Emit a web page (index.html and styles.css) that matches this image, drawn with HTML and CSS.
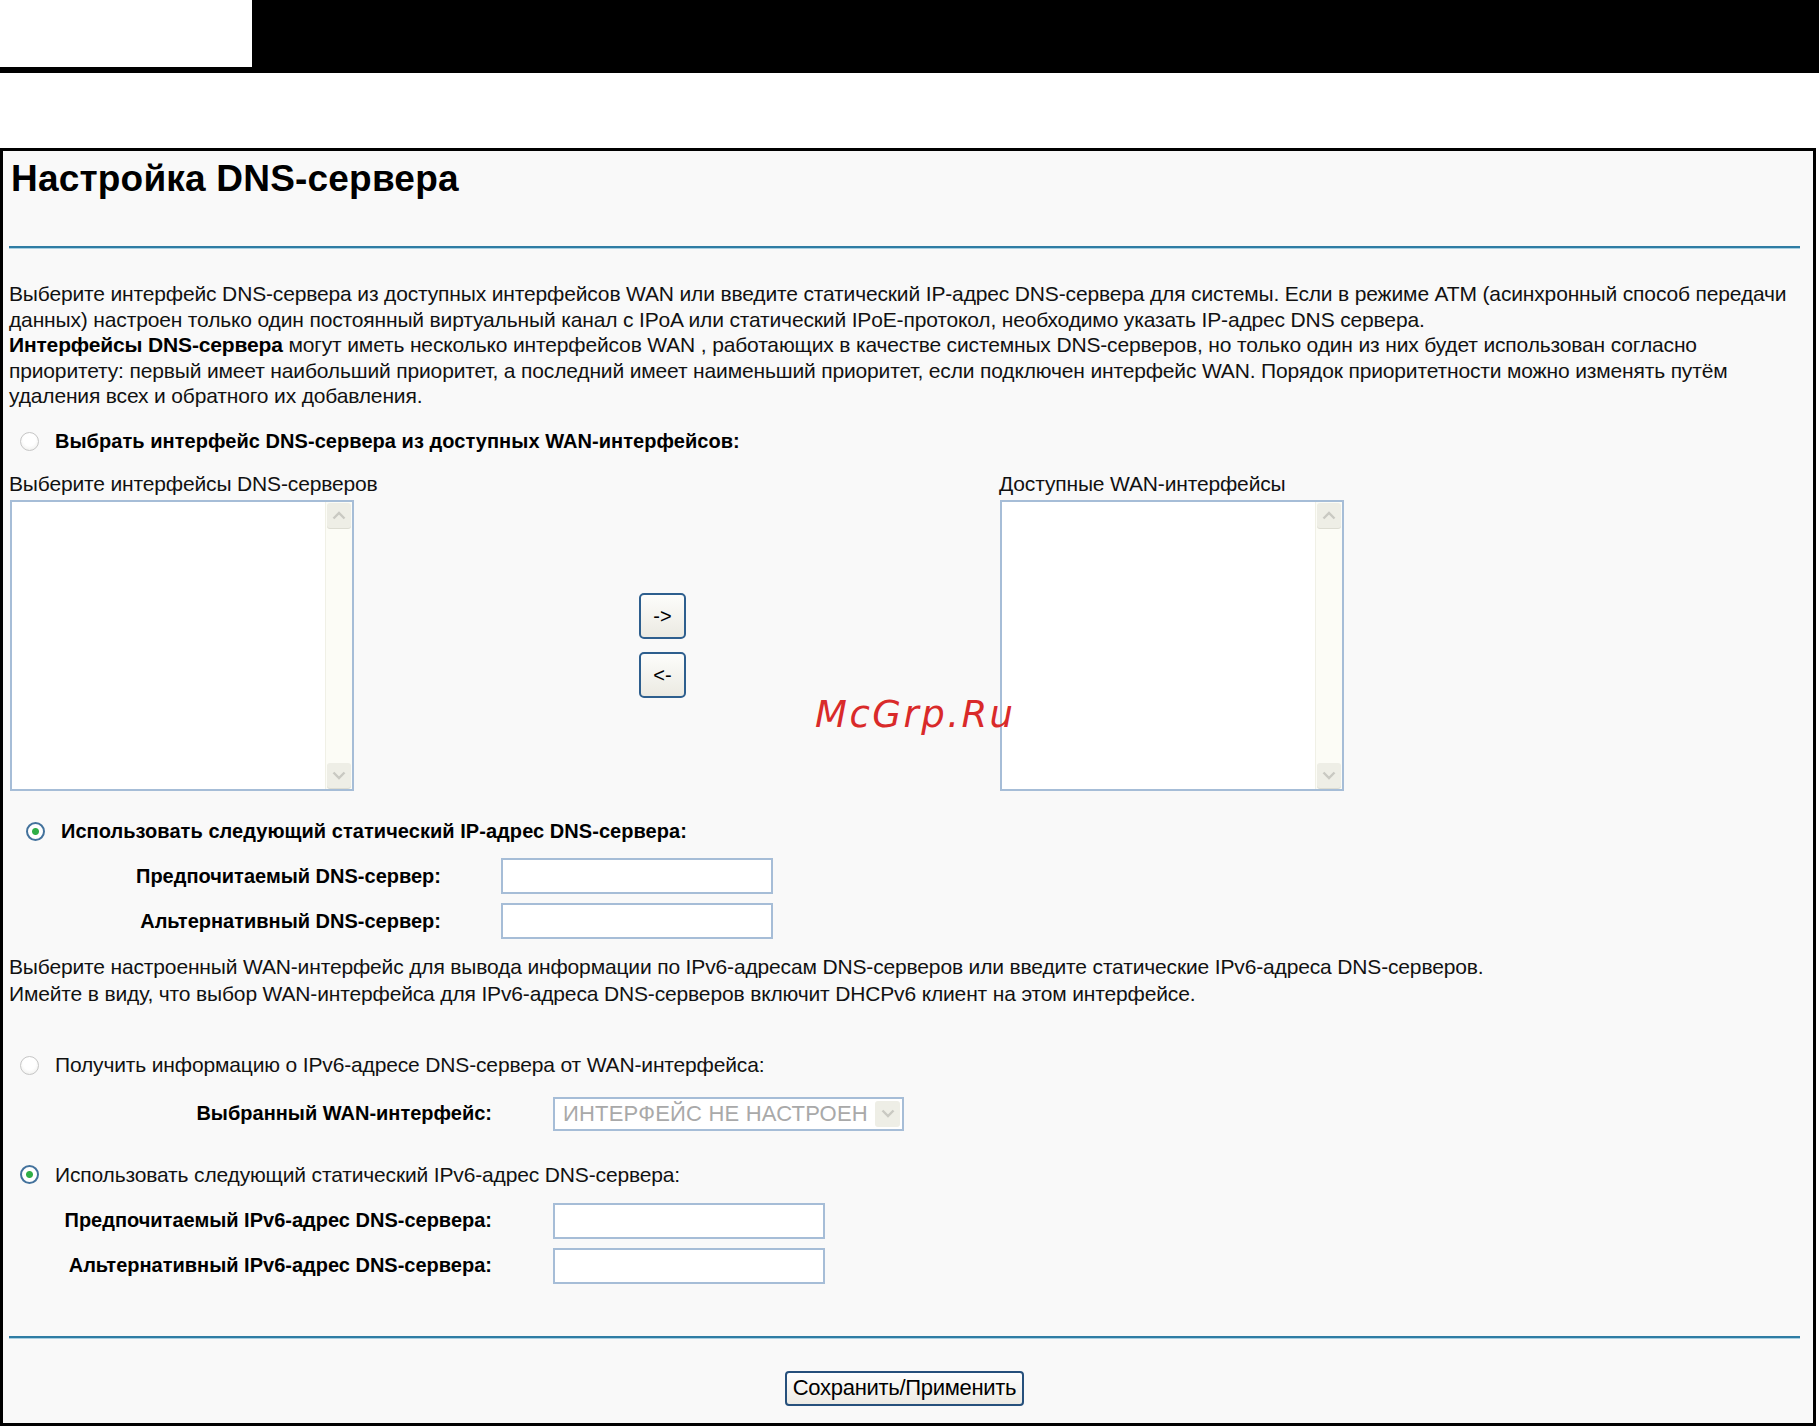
FILE: index.html
```html
<!DOCTYPE html>
<html lang="ru">
<head>
    <meta charset="UTF-8">
    <title>Настройка DNS-сервера</title>
    <link rel="stylesheet" href="styles.css">
</head>
<body>

    <div class="topbar">
        <div class="topbar-logo"></div>
    </div>

    <div class="panel">
        <h1>Настройка DNS-сервера</h1>
        <div class="sep sep-top"></div>

        <p class="intro">Выберите интерфейс DNS-сервера из доступных интерфейсов WAN или введите статический IP-адрес DNS-сервера для системы. Если в режиме АТМ (асинхронный способ передачи данных) настроен только один постоянный виртуальный канал с IPoA или статический IPoE-протокол, необходимо указать IP-адрес DNS сервера.<br><b>Интерфейсы DNS-сервера</b> могут иметь несколько интерфейсов WAN , работающих в качестве системных DNS-серверов, но только один из них будет использован согласно приоритету: первый имеет наибольший приоритет, а последний имеет наименьший приоритет, если подключен интерфейс WAN. Порядок приоритетности можно изменять путём удаления всех и обратного их добавления.</p>

        <label class="radio-row row-wan">
            <input type="radio" name="dns4">
            <b>Выбрать интерфейс DNS-сервера из доступных WAN-интерфейсов:</b>
        </label>

        <div class="lists">
            <div class="list-col">
                <div class="list-title">Выберите интерфейсы DNS-серверов</div>
                <div class="listbox">
                    <div class="scroll">
                        <span class="sb-btn"><svg width="14" height="9" viewBox="0 0 14 9"><path d="M1.5 7.5 L7 2 L12.5 7.5" fill="none" stroke="#c9c9c2" stroke-width="2.4"/></svg></span>
                        <span class="sb-btn"><svg width="14" height="9" viewBox="0 0 14 9"><path d="M1.5 1.5 L7 7 L12.5 1.5" fill="none" stroke="#c9c9c2" stroke-width="2.4"/></svg></span>
                    </div>
                </div>
            </div>
            <div class="move-btns">
                <button class="move">-&gt;</button>
                <button class="move">&lt;-</button>
            </div>
            <div class="list-col list-right">
                <div class="list-title">Доступные WAN-интерфейсы</div>
                <div class="listbox">
                    <div class="scroll">
                        <span class="sb-btn"><svg width="14" height="9" viewBox="0 0 14 9"><path d="M1.5 7.5 L7 2 L12.5 7.5" fill="none" stroke="#c9c9c2" stroke-width="2.4"/></svg></span>
                        <span class="sb-btn"><svg width="14" height="9" viewBox="0 0 14 9"><path d="M1.5 1.5 L7 7 L12.5 1.5" fill="none" stroke="#c9c9c2" stroke-width="2.4"/></svg></span>
                    </div>
                </div>
            </div>
        </div>

        <label class="radio-row row-static">
            <input type="radio" name="dns4" checked>
            <b>Использовать следующий статический IP-адрес DNS-сервера:</b>
        </label>

        <div class="form-row first">
            <div class="label">Предпочитаемый DNS-сервер:</div>
            <input class="field" type="text">
        </div>
        <div class="form-row">
            <div class="label">Альтернативный DNS-сервер:</div>
            <input class="field" type="text">
        </div>

        <p class="ipv6-note">Выберите настроенный WAN-интерфейс для вывода информации по IPv6-адресам DNS-серверов или введите статические IPv6-адреса DNS-серверов.<br>Имейте в виду, что выбор WAN-интерфейса для IPv6-адреса DNS-серверов включит DHCPv6 клиент на этом интерфейсе.</p>

        <label class="radio-row row-v6wan">
            <input type="radio" name="dns6">
            <span>Получить информацию о IPv6-адресе DNS-сервера от WAN-интерфейса:</span>
        </label>

        <div class="form-row wide select-row">
            <div class="label">Выбранный WAN-интерфейс:</div>
            <div class="select">
                <span class="select-text">ИНТЕРФЕЙС НЕ НАСТРОЕН</span>
                <span class="select-arrow"><svg width="14" height="9" viewBox="0 0 14 9"><path d="M1.5 1.5 L7 7 L12.5 1.5" fill="none" stroke="#c9c9c2" stroke-width="2.4"/></svg></span>
            </div>
        </div>

        <label class="radio-row row-v6static">
            <input type="radio" name="dns6" checked>
            <span>Использовать следующий статический IPv6-адрес DNS-сервера:</span>
        </label>

        <div class="form-row wide first">
            <div class="label">Предпочитаемый IPv6-адрес DNS-сервера:</div>
            <input class="field" type="text">
        </div>
        <div class="form-row wide">
            <div class="label">Альтернативный IPv6-адрес DNS-сервера:</div>
            <input class="field" type="text">
        </div>

        <div class="sep sep-bottom"></div>

        <div class="actions">
            <button class="save">Сохранить/Применить</button>
        </div>

        <div class="watermark">McGrp.Ru</div>
    </div>

</body>
</html>
```

FILE: styles.css
```css
body {
    margin: 0;
    background-color: #fff;
    font-family: "Liberation Sans", Arial, sans-serif;
    letter-spacing: -0.15px;
    color: #111;
}
.topbar {
    height: 73px;
    background-color: #000;
}
.topbar-logo {
    width: 252px;
    height: 67px;
    background-color: #fff;
}
.panel {
    position: relative;
    box-sizing: border-box;
    width: 1816px;
    margin-top: 75px;
    padding: 0 13px 17px 6px;
    border: 3px solid #000;
    background-color: #f9f9f9;
}
h1 {
    margin: 7px 0 0 2px;
    font-size: 37px;
    line-height: 42px;
    font-weight: bold;
    letter-spacing: 0.2px;
    color: #000;
}
.sep {
    height: 2px;
    background-color: #2f7da4;
    box-shadow: 0 1px 0 #a9d0e2;
}
.sep-top {
    margin-top: 46px;
}
.sep-bottom {
    margin-top: 52px;
}
.intro {
    margin: 33px 0 0;
    font-size: 21px;
    line-height: 25.5px;
}
.intro b {
    color: #000;
}
.radio-row {
    display: flex;
    align-items: center;
    height: 26px;
    font-size: 20px;
}
.radio-row b {
    letter-spacing: 0.05px;
    color: #000;
}
.radio-row span {
    font-size: 21px;
}
.radio-row input {
    -webkit-appearance: none;
    appearance: none;
    box-sizing: border-box;
    width: 19px;
    height: 19px;
    margin: 0 16px 0 11px;
    border: 1px solid #c6c6c6;
    border-radius: 50%;
    background: radial-gradient(circle at 50% 40%, #fff 45%, #e9e9e6 100%);
}
.radio-row input:checked {
    border: 2px solid #43729c;
    background: radial-gradient(circle, #2fae46 0, #2fae46 3px, #fff 4px);
}
.row-wan {
    margin-top: 20px;
}
.row-static {
    margin-top: 27px;
}
.row-static input {
    margin-left: 17px;
}
.row-v6wan {
    margin-top: 45px;
}
.row-v6static {
    margin-top: 31px;
}
.lists {
    display: flex;
    margin-top: 16px;
}
.list-col {
    width: 344px;
}
.list-right {
    margin-left: 313px;
}
.list-title {
    height: 25.5px;
    margin-bottom: 4px;
    font-size: 21px;
    line-height: 25.5px;
    white-space: nowrap;
}
.listbox {
    box-sizing: border-box;
    display: flex;
    justify-content: flex-end;
    width: 344px;
    height: 291px;
    margin-left: 1px;
    border: 2px solid #a6bdd7;
    background-color: #fff;
}
.scroll {
    display: flex;
    flex-direction: column;
    justify-content: space-between;
    width: 24px;
    padding: 1px;
    background-color: #fcfcf6;
    border-left: 1px solid #f0f0e6;
}
.sb-btn {
    display: flex;
    align-items: center;
    justify-content: center;
    height: 25px;
    border-radius: 3px;
    background-color: #eeeee6;
    box-shadow: 0 1px 0 #dcdcd2;
}
.move-btns {
    display: flex;
    flex-direction: column;
    justify-content: center;
    gap: 13px;
    margin-left: 286px;
    padding-top: 29.5px;
}
.move {
    box-sizing: border-box;
    width: 47px;
    height: 46px;
    padding: 0;
    border: 2px solid #2e5f8e;
    border-radius: 5px;
    background: linear-gradient(#fdfdfb, #ebeae2);
    font-family: "Liberation Sans", Arial, sans-serif;
    font-size: 20px;
    color: #000;
}
.form-row {
    display: flex;
    align-items: center;
    margin-top: 9px;
}
.form-row.first {
    margin-top: 14px;
}
.row-v6static + .form-row.first {
    margin-top: 15px;
}
.select-row {
    margin-top: 18.5px;
}
.label {
    width: 432px;
    margin-right: 60px;
    text-align: right;
    font-size: 20px;
    font-weight: bold;
    letter-spacing: 0;
    color: #000;
    white-space: nowrap;
}
.wide .label {
    width: 483px;
    margin-right: 61px;
}
.field {
    box-sizing: border-box;
    width: 272px;
    height: 36px;
    margin: 0;
    border: 2px solid #a6bdd7;
    background-color: #fff;
}
.ipv6-note {
    margin: 15px 0 0;
    font-size: 21px;
    line-height: 26.5px;
}
.select {
    box-sizing: border-box;
    display: flex;
    align-items: center;
    justify-content: space-between;
    width: 351px;
    height: 34px;
    padding: 0 2px 0 8px;
    border: 2px solid #a6bdd7;
    background-color: #fff;
}
.select-text {
    font-size: 22px;
    letter-spacing: 0.2px;
    color: #a9a9a9;
    white-space: nowrap;
}
.select-arrow {
    display: flex;
    align-items: center;
    justify-content: center;
    width: 25px;
    height: 26px;
    border-radius: 3px;
    background-color: #eeeee6;
}
.actions {
    display: flex;
    justify-content: center;
    margin-top: 33px;
}
.save {
    box-sizing: border-box;
    width: 239px;
    height: 35px;
    padding: 0;
    border: 2px solid #26507c;
    border-radius: 4px;
    background: linear-gradient(#ffffff, #eceae4);
    font-family: "Liberation Sans", Arial, sans-serif;
    font-size: 22px;
    letter-spacing: -0.3px;
    color: #000;
}
.watermark {
    position: absolute;
    left: 812px;
    top: 544px;
    font-family: "DejaVu Sans", sans-serif;
    font-style: italic;
    font-size: 37px;
    line-height: 40px;
    letter-spacing: 2.5px;
    color: #d92a2a;
}
```
